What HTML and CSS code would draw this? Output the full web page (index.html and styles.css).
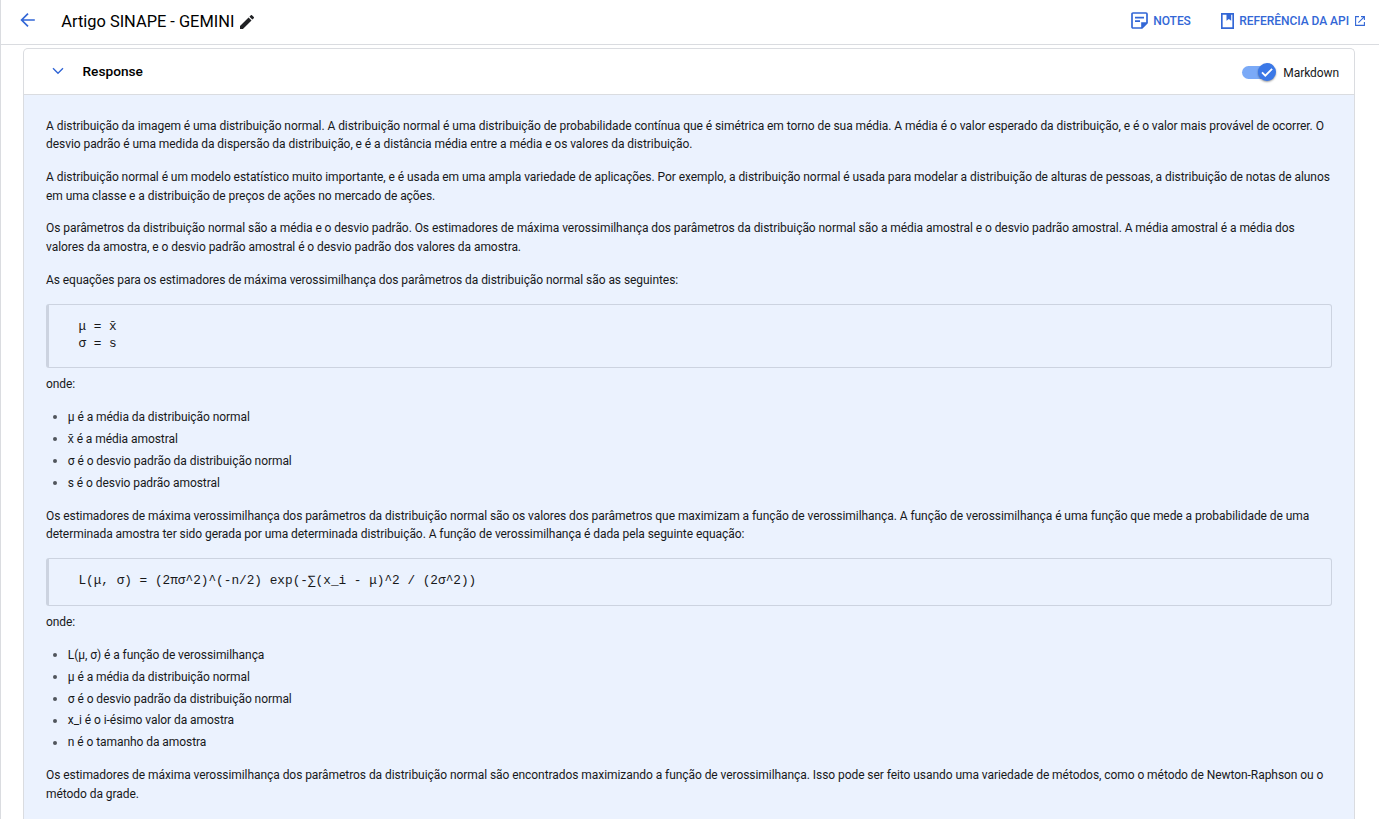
FILE: index.html
```html
<!DOCTYPE html>
<html lang="pt">
<head>
<meta charset="utf-8">
<title>Artigo SINAPE - GEMINI</title>
<link rel="stylesheet" href="styles.css">
</head>
<body>
<div class="page">
  <header class="topbar">
    <svg class="back" viewBox="0 0 16 16"><path d="M14.8 8H2M8 1.6 1.6 8 8 14.4"/></svg>
    <h1 class="title">Artigo SINAPE - GEMINI</h1>
    <svg class="pencil" viewBox="3 3 18 18"><path d="M3 17.25V21h3.75L17.81 9.94l-3.75-3.75L3 17.25zM20.71 7.04a1 1 0 0 0 0-1.41l-2.34-2.34a1 1 0 0 0-1.41 0l-1.83 1.83 3.75 3.75 1.83-1.83z"/></svg>
    <a class="action notes"><svg viewBox="0 0 17 17" class="notes-icon"><path d="M2 1h13q1 0 1 1v9l-5 5H2q-1 0-1-1V2q0-1 1-1z"/><path d="M4 5.6h9M4 9.2h5"/><path class="solid" d="M10.2 16.5v-6.3h6.3z"/></svg>NOTES</a>
    <a class="action api"><svg viewBox="0 0 13 16" class="book-icon"><path d="M.8.8h11.4v14.4H.8z"/><path class="solid" d="M5.5.8h4.7v7L7.85 6.1 5.5 7.8z"/></svg>REFERÊNCIA DA API<svg viewBox="0 0 10 10" class="open-icon"><path d="M4 .6H.6v8.8h8.8V6M6 .6h3.4V4M9.2.8 3.4 6.6"/></svg></a>
  </header>
  <main class="card">
    <div class="card-head">
      <svg class="chevron" viewBox="0 0 12 8"><path d="M1 1.2 6 6.2l5-5"/></svg>
      <h2>Response</h2>
      <div class="toggle"><span class="track"></span><span class="thumb"><svg viewBox="0 0 18 18"><path d="m4 9.4 3.3 3.3 6.8-6.9"/></svg></span></div>
      <span class="toggle-label">Markdown</span>
    </div>
    <div class="content">
      <p>A distribuição da imagem é uma distribuição normal. A distribuição normal é uma distribuição de probabilidade contínua que é simétrica em torno de sua média. A média é o valor esperado da distribuição, e é o valor mais provável de ocorrer. O<br>desvio padrão é uma medida da dispersão da distribuição, e é a distância média entre a média e os valores da distribuição.</p>
      <p>A distribuição normal é um modelo estatístico muito importante, e é usada em uma ampla variedade de aplicações. Por exemplo, a distribuição normal é usada para modelar a distribuição de alturas de pessoas, a distribuição de notas de alunos<br>em uma classe e a distribuição de preços de ações no mercado de ações.</p>
      <p>Os parâmetros da distribuição normal são a média e o desvio padrão. Os estimadores de máxima verossimilhança dos parâmetros da distribuição normal são a média amostral e o desvio padrão amostral. A média amostral é a média dos<br>valores da amostra, e o desvio padrão amostral é o desvio padrão dos valores da amostra.</p>
      <p>As equações para os estimadores de máxima verossimilhança dos parâmetros da distribuição normal são as seguintes:</p>
      <pre class="two">μ = x̄
σ = s</pre>
      <p>onde:</p>
      <ul>
        <li>μ é a média da distribuição normal</li>
        <li>x̄ é a média amostral</li>
        <li>σ é o desvio padrão da distribuição normal</li>
        <li>s é o desvio padrão amostral</li>
      </ul>
      <p>Os estimadores de máxima verossimilhança dos parâmetros da distribuição normal são os valores dos parâmetros que maximizam a função de verossimilhança. A função de verossimilhança é uma função que mede a probabilidade de uma<br>determinada amostra ter sido gerada por uma determinada distribuição. A função de verossimilhança é dada pela seguinte equação:</p>
      <pre class="one">L(μ, σ) = (2πσ^2)^(-n/2) exp(-∑(x_i - μ)^2 / (2σ^2))</pre>
      <p>onde:</p>
      <ul>
        <li>L(μ, σ) é a função de verossimilhança</li>
        <li>μ é a média da distribuição normal</li>
        <li>σ é o desvio padrão da distribuição normal</li>
        <li>x_i é o i-ésimo valor da amostra</li>
        <li>n é o tamanho da amostra</li>
      </ul>
      <p>Os estimadores de máxima verossimilhança dos parâmetros da distribuição normal são encontrados maximizando a função de verossimilhança. Isso pode ser feito usando uma variedade de métodos, como o método de Newton-Raphson ou o<br>método da grade.</p>
    </div>
  </main>
</div>
</body>
</html>
```
FILE: styles.css
```css
* { box-sizing: border-box; }
body { margin: 0; background: #fff; color: #17181a; font-family: Roboto, sans-serif; overflow: hidden; }
.page { height: 819px; display: flex; flex-direction: column; border-left: 1px solid #dadce0; overflow: hidden; }
svg { flex: none; fill: none; }
.topbar { height: 45px; flex: none; display: flex; align-items: center; padding: 0 14px 3px 18.5px; border-bottom: 1px solid #dadce0; }
.back { width: 16px; height: 16px; margin-top: -2px; stroke: #3367d6; stroke-width: 1.7; }
.title { margin: 2px 6px 0 25.8px; font-size: 16.4px; font-weight: 400; line-height: 20px; color: #000; white-space: nowrap; }
.pencil { width: 14px; height: 14px; margin-top: 3px; fill: #202124; }
.action { display: flex; align-items: center; font-size: 12px; letter-spacing: -0.05px; font-weight: 500; color: #3367d6; white-space: nowrap; }
.action svg { stroke: #3367d6; stroke-width: 1.7; }
.action .solid { fill: #3367d6; stroke: none; }
.notes { margin-left: auto; }
.notes-icon { width: 17px; height: 17px; margin-right: 5px; }
.api { margin-left: 30.5px; }
.book-icon { width: 13px; height: 16px; margin-right: 5px; }
.action .open-icon { width: 10px; height: 10px; margin-left: 6px; stroke-width: 1.1; }
.card { flex: 1; min-height: 0; margin: 3px 24px 0 22px; border: 1px solid #dadce0; border-bottom: 0; border-radius: 5px 5px 0 0; overflow: hidden; }
.card-head { height: 46px; display: flex; align-items: center; padding: 0 15px 0 28px; border-bottom: 1px solid #dadce0; }
.chevron { width: 12px; height: 8px; margin-top: -2px; stroke: #3367d6; stroke-width: 1.4; }
h2 { margin: -1px auto 0 18.5px; font-size: 13.7px; font-weight: 500; color: #000; }
.toggle { width: 34px; height: 18px; display: flex; align-items: center; margin-right: 7px; margin-top: 1px; }
.track { width: 28px; height: 13px; border-radius: 7px; background: #7baaf7; }
.thumb { width: 18px; height: 18px; margin-left: -12.5px; border-radius: 50%; background: #3b78e7; box-shadow: 0 1px 2px #0006; display: flex; }
.thumb svg { width: 18px; height: 18px; stroke: #fff; stroke-width: 1.8; }
.toggle-label { font-size: 12px; letter-spacing: -0.08px; margin-top: 3px; }
.content { height: 740px; padding: 21.8px 22px 0; background: #ebf2fe; font-size: 12px; letter-spacing: -0.061px; line-height: 18.5px; }
p { margin: 0 0 14.3px; white-space: nowrap; }
pre { margin: 14.5px 0 6.9px; padding: 13px 29px 0 29.4px; border: 1px solid #ccd3e0; border-left-width: 3px; border-radius: 3px; font: 12.76px/17px "Liberation Mono", monospace; letter-spacing: 0; }
.two { height: 64px; margin-bottom: 7.4px; }
.one { height: 48px; }
ul { margin: 0 0 11.1px; padding: 0 0 0 7px; list-style: none; }
li { display: flex; align-items: center; height: 18.5px; margin-bottom: 3.4px; }
li:last-child { margin-bottom: 14.5px; }
li::before { content: ""; width: 4px; height: 4px; margin-right: 10.8px; border-radius: 50%; background: #50555c; }
```
